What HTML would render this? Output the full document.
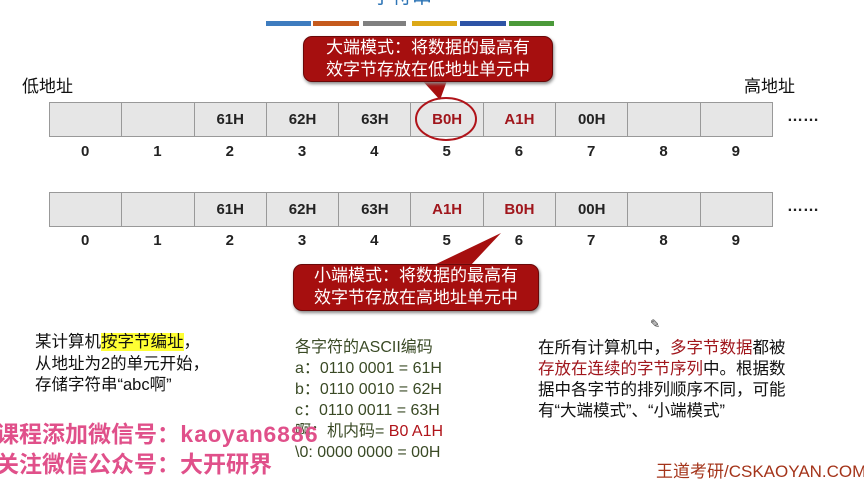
<!DOCTYPE html>
<html><head><meta charset="utf-8"><style>
body{margin:0;width:864px;height:474px;background:#fff;position:relative;overflow:hidden;font-family:"Liberation Sans","Noto Sans CJK SC",sans-serif;}
.a{position:absolute;white-space:nowrap}
.row{position:absolute;left:49px;display:flex;border:1px solid #999;background:#e6e6e6}
.row div{width:71.3px;height:33px;border-right:1px solid #999;text-align:center;line-height:33px;font-size:15px;font-weight:bold;color:#222}
.row div:last-child{border-right:none}
.idx{position:absolute;left:49px;display:flex}
.idx div{width:72.3px;text-align:center;font-size:15px;font-weight:bold;color:#222}
.red{color:#a0161c!important}
.bar{position:absolute;top:21px;height:5px}
.call{position:absolute;background:#a60f0f;border:1px solid #6a0808;border-radius:9px;color:#fff;font-size:17px;line-height:22px;text-align:center;box-shadow:1px 2px 3px #888}
.t{font-size:16.5px;line-height:21.5px;color:#111}
</style></head><body>
<div class="a" style="left:372px;top:-20px;font-size:20px;color:#2e75b6">字符串</div>
<div class="bar" style="left:266px;width:45px;background:#3e7cbf"></div>
<div class="bar" style="left:313px;width:46px;background:#c55a1d"></div>
<div class="bar" style="left:363px;width:43px;background:#808080"></div>
<div class="bar" style="left:412px;width:45px;background:#dca918"></div>
<div class="bar" style="left:460px;width:46px;background:#2e54a6"></div>
<div class="bar" style="left:509px;width:45px;background:#4b9a3a"></div>

<svg class="a" style="left:0;top:0" width="864" height="474">
<polygon points="420,78 448,78 440,100" fill="#a60f0f"/>
<polygon points="432,266 470,266 501,233" fill="#a60f0f"/>
</svg>
<div class="call" style="left:303px;top:36px;width:248px;height:44px">大端模式：将数据的最高有<br>效字节存放在低地址单元中</div>
<div class="call" style="left:293px;top:264px;width:244px;height:45px">小端模式：将数据的最高有<br>效字节存放在高地址单元中</div>

<div class="a" style="left:22px;top:72px;font-size:17px;color:#111">低地址</div>
<div class="a" style="left:744px;top:72px;font-size:17px;color:#111">高地址</div>

<div class="row" style="top:102px"><div></div><div></div><div>61H</div><div>62H</div><div>63H</div><div class="red">B0H</div><div class="red">A1H</div><div>00H</div><div></div><div></div></div>
<div class="a" style="left:787px;top:108px;font-weight:bold;color:#222">……</div>
<div class="idx" style="top:143px"><div>0</div><div>1</div><div>2</div><div>3</div><div>4</div><div>5</div><div>6</div><div>7</div><div>8</div><div>9</div></div>
<svg class="a" style="left:412px;top:96px" width="70" height="48"><ellipse cx="34" cy="23" rx="30" ry="21" fill="none" stroke="#b0141a" stroke-width="2"/></svg>

<div class="row" style="top:192px"><div></div><div></div><div>61H</div><div>62H</div><div>63H</div><div class="red">A1H</div><div class="red">B0H</div><div>00H</div><div></div><div></div></div>
<div class="a" style="left:787px;top:198px;font-weight:bold;color:#222">……</div>
<div class="idx" style="top:232px"><div>0</div><div>1</div><div>2</div><div>3</div><div>4</div><div>5</div><div>6</div><div>7</div><div>8</div><div>9</div></div>

<div class="a t" style="left:35px;top:332px">某计算机<span style="background:#ffff33">按字节编址</span>，<br>从地址为2的单元开始，<br>存储字符串“abc啊”</div>
<div class="a" style="left:295px;top:337px;color:#3a4a25;font-size:16px;line-height:21px">各字符的ASCII编码<br>a：0110 0001 = 61H<br>b：0110 0010 = 62H<br>c：0110 0011 = 63H<br>啊：机内码= <span style="color:#b0141a">B0 A1H</span><br>\0: 0000 0000 = 00H</div>
<div class="a t" style="left:538px;top:338px;font-size:16.5px;line-height:21px">在所有计算机中，<span style="color:#a0161c">多字节数据</span>都被<br><span style="color:#a0161c">存放在连续的字节序列</span>中。根据数<br>据中各字节的排列顺序不同，可能<br>有“大端模式”、“小端模式”</div>
<div class="a" style="left:650px;top:317px;font-size:12px;color:#333">✎</div>
<div class="a" style="left:-4px;top:421px;font-size:23px;font-weight:bold;color:#e0508a;font-family:'Liberation Mono','Noto Sans CJK SC',monospace;line-height:30px">课程添加微信号：kaoyan6886<br>关注微信公众号：大开研界</div>
<div class="a" style="left:656px;top:457px;font-size:17px;color:#a4341a">王道考研/CSKAOYAN.COM</div>
</body></html>
